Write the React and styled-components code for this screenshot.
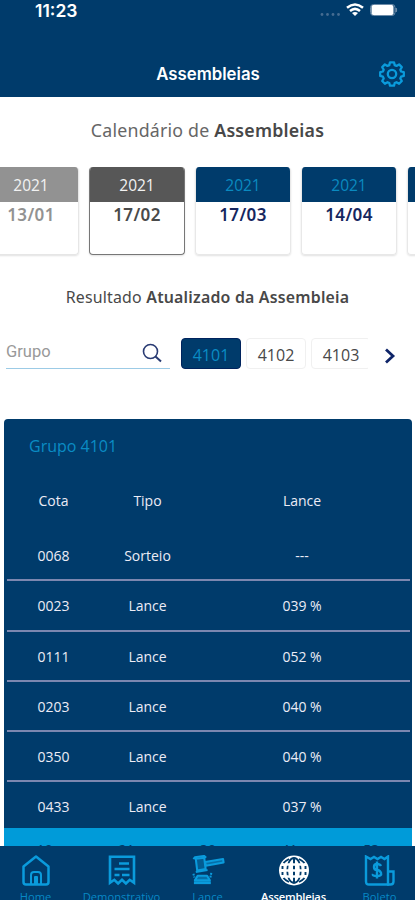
import { createGlobalStyle, styled } from 'styled-components';

const GlobalStyle = createGlobalStyle`
  * {
    box-sizing: border-box;
  }

  body {
    margin: 0;
    background: #fff;
    font-family: 'Open Sans', 'Noto Sans', sans-serif;
  }
`;

const Screen = styled.div`
  width: 415px;
  height: 900px;
  overflow: hidden;
  display: flex;
  flex-direction: column;
  background: #fff;
`;

const Header = styled.header`
  flex: none;
  height: 97px;
  background: #003b6b;
  color: #fff;
  font-family: Inter, sans-serif;
`;

const StatusBar = styled.div`
  display: flex;
  justify-content: space-between;
  height: 22px;
  padding: 0 17px 0 35px;
`;

const Clock = styled.span`
  font-size: 17.5px;
  font-weight: 600;
  line-height: 21px;
`;

const TitleBar = styled.div`
  display: grid;
  grid-template-columns: 1fr auto 1fr;
  align-items: center;
  height: 75px;
  padding: 37px 10px 8px 11px;
`;

const Title = styled.h1`
  grid-column: 2;
  margin: 0;
  font-size: 16.8px;
  font-weight: 600;
  line-height: 24px;
`;

const GearButton = styled.button`
  justify-self: end;
  display: flex;
  padding: 0;
  border: none;
  background: none;
  color: #0a9bdc;
`;

const Heading = styled.h2`
  flex: none;
  margin: ${(props) => props.$margin};
  text-align: center;
  color: ${(props) => props.$color};
  font-family: 'Noto Sans', sans-serif;
  font-size: ${(props) => props.$size};
  font-weight: 400;
  letter-spacing: 0.2px;
  line-height: 24px;
  white-space: nowrap;

  b {
    font-weight: 600;
    color: #484848;
  }
`;

const Calendar = styled.div`
  flex: none;
  display: flex;
  gap: 10px;
  width: 415px;
  margin-top: 25px;
  padding-bottom: 4px;
  overflow: hidden;
`;

const tones = {
  past: { head: '#929292', year: '#f2f2f2', date: '#929292', border: '#e6e6e6' },
  current: { head: '#575757', year: '#f2f2f2', date: '#4a4a4a', border: '#777' },
  next: { head: '#003b6b', year: '#0a8ac0', date: '#15275f', border: '#e8e8e8' },
};

const DateCard = styled.div`
  flex: none;
  width: 96px;
  height: 88px;
  border: 1px solid ${(props) => tones[props.$tone].border};
  border-top: none;
  border-radius: 4px;
  overflow: hidden;
  text-align: center;
  box-shadow: 0 1px 2px rgba(0, 0, 0, 0.12);

  &:first-child {
    margin-left: -17px;
  }
`;

const Year = styled.div`
  height: 35px;
  margin: 0 -1px;
  background: ${(props) => tones[props.$tone].head};
  color: ${(props) => tones[props.$tone].year};
  font-size: 15.5px;
  line-height: 37px;
`;

const Day = styled.div`
  color: ${(props) => tones[props.$tone].date};
  font-family: 'Noto Sans', sans-serif;
  font-size: 17px;
  font-weight: 600;
  letter-spacing: 0.4px;
  line-height: 26px;
`;

const Filters = styled.div`
  flex: none;
  display: flex;
  height: 33px;
  margin-top: 29px;
  padding-left: 6px;
`;

const SearchField = styled.label`
  display: flex;
  align-items: center;
  width: 164px;
  height: 31px;
  padding-right: 8px;
  border-bottom: 1px solid #9ccbe6;
`;

const SearchInput = styled.input`
  flex: 1;
  min-width: 0;
  height: 26px;
  margin-bottom: 3px;
  padding: 0;
  border: none;
  outline: none;
  background: none;
  font: 16.5px Roboto, sans-serif;

  &::placeholder {
    color: #999;
  }
`;

const GroupList = styled.div`
  display: flex;
  gap: 5px;
  width: 187px;
  margin-left: 11px;
  overflow: hidden;
`;

const GroupButton = styled.button`
  flex: none;
  width: 60px;
  height: 31px;
  padding: 2px 0 0;
  border: 1px solid ${(props) => (props.$active ? '#00235d' : '#f0f0f0')};
  border-radius: 4px;
  background: ${(props) => (props.$active ? '#003b6b' : '#fff')};
  color: ${(props) => (props.$active ? '#0a8cc4' : '#484848')};
  font: 16px 'Open Sans', sans-serif;
`;

const NextButton = styled.button`
  display: flex;
  align-items: center;
  margin-left: 16px;
  padding: 2px 0 0;
  border: none;
  background: none;
  color: #0e2468;
`;

const Results = styled.section`
  flex: 1;
  min-height: 0;
  margin: 48px 3px 0 4px;
  border-radius: 4px 4px 0 0;
  overflow: hidden;
  background: #003b6b;
  color: #ececf6;
`;

const GroupTitle = styled.h3`
  margin: 0;
  padding: 15px 0 0 25px;
  color: #0a8cc4;
  font-size: 16px;
  font-weight: 400;
  line-height: 24px;
`;

const Row = styled.div`
  display: grid;
  grid-template-columns: 93px 95px 1fr;
  height: ${(props) => (props.$head ? '73px' : '50.25px')};
  margin: 0 2px 0 3px;
  padding-top: ${(props) => (props.$head ? '32px' : '14px')};
  border-bottom: ${(props) => (props.$head ? 'none' : '2px solid #7c87b0')};
  font-size: 14px;
  font-weight: 500;
  line-height: 22px;
  text-align: center;

  &:nth-last-child(2) {
    height: 46px;
    border-bottom: none;
  }
`;

const Cell = styled.span`
  padding-right: ${(props) => (props.$wide ? '1px' : '0')};
`;

const Pages = styled.div`
  display: flex;
  justify-content: space-around;
  height: 40px;
  padding-top: 12px;
  background: #009bd9;
  color: #003b6b;
  font-size: 14px;
  line-height: 20px;
`;

const TabBar = styled.nav`
  flex: none;
  display: grid;
  grid-template-columns: repeat(5, 86px);
  justify-content: center;
  height: 54px;
  overflow: hidden;
  background: #003b6b;
`;

const Tab = styled.a`
  display: flex;
  flex-direction: column;
  align-items: center;
  padding-top: 9px;
  color: ${(props) => (props.$active ? '#fff' : '#0a9bdc')};

  svg {
    height: 31px;
  }
`;

const TabLabel = styled.span`
  margin-top: 2px;
  font-size: 11.2px;
  font-weight: ${(props) => (props.$active ? 600 : 400)};
  letter-spacing: ${(props) => (props.$active ? '-0.2px' : '0')};
  line-height: 18px;
  white-space: nowrap;
  opacity: ${(props) => (props.$active ? 1 : 0.8)};
`;

const StatusIcons = () => (
  <svg width="78" height="22" viewBox="0 0 78 22" fill="none">
    <g fill="#456c91">
      <circle cx="2" cy="14.5" r="1.4" />
      <circle cx="7.5" cy="14.5" r="1.4" />
      <circle cx="13" cy="14.5" r="1.4" />
      <circle cx="18.5" cy="14.5" r="1.4" />
    </g>
    <path d="M27 7.8Q35 1.1 43 7.8M30 11Q35 6.7 40 11" stroke="#fff" strokeWidth="2.5" />
    <path d="m32 13 3 3 3-3Q35 10.8 32 13Z" fill="#fff" />
    <rect x="50.5" y="4.5" width="24.5" height="11" rx="3" stroke="#6c8ba8" />
    <rect x="51.5" y="5" width="22" height="10" rx="1.8" fill="#fff" />
    <path d="M76 8v4q1.5-2 0-4Z" fill="#8da5bb" stroke="#6c8ba8" />
  </svg>
);

const GearIcon = () => (
  <svg width="26" height="26" viewBox="0 0 26 26" fill="none" stroke="currentColor" strokeWidth="2.3" strokeLinejoin="round">
    <path d="M11 1.3h4l.7 2.8 1.8.8 2.6-1.5 2.7 2.7-1.5 2.6.8 1.8 2.7.7v3.7l-2.7.7-.8 1.8 1.5 2.6-2.7 2.7-2.6-1.5-1.8.8-.7 2.7h-4l-.7-2.7-1.8-.8-2.6 1.5L3.2 20l1.5-2.6-.8-1.8-2.7-.7v-3.7l2.7-.7.8-1.8L3.2 6.1l2.7-2.7 2.6 1.5 1.800-.8z" />
    <circle cx="13" cy="13" r="4.2" />
  </svg>
);

const SearchIcon = () => (
  <svg width="20" height="20" viewBox="0 0 20 20" fill="none" stroke="#293b73" strokeWidth="1.6">
    <circle cx="8.5" cy="8.5" r="7" />
    <path d="m13.5 13.5 5.5 5" strokeWidth="2" />
  </svg>
);

const ChevronIcon = () => (
  <svg width="12" height="16" viewBox="0 0 12 16" fill="none" stroke="currentColor" strokeWidth="2.8">
    <path d="m2 1.5 7 6.5-7 6.5" />
  </svg>
);

const HomeIcon = () => (
  <svg width="28" height="31" viewBox="0 0 28 31" fill="none" stroke="currentColor" strokeWidth="2.5" strokeLinejoin="round">
    <path d="M1.5 11.5 14 1.5l12.5 10V27q0 2.5-2.500 2.500H4q-2.500 0-2.500-2.500Z" />
    <path d="M9 29v-9q0-3 3-3h4q3 0 3 3v9M13 29v-7h2v7" strokeWidth="2" />
  </svg>
);

const ReceiptIcon = () => (
  <svg width="28" height="31" viewBox="0 0 28 31" fill="none" stroke="currentColor" strokeWidth="2.6">
    <path d="M2 1.8h24v26l-4.3-3-3.8 3.6-3.9-3.6-3.9 3.6-3.8-3.6-4.300 3Z" />
    <path d="M11 8.5h10M6.5 14h15M6.5 20h5M14 20h7.5" strokeWidth="2.3" />
  </svg>
);

const GavelIcon = () => (
  <svg width="38" height="33" viewBox="0 0 38 33" fill="none" stroke="currentColor" strokeWidth="2.2" strokeLinejoin="round">
    <path d="m6 4 9-1 1.5 12-9 1.5Z" fill="currentColor" fillOpacity=".35" />
    <path d="M3.500 4.500 5 2.500 15 1l2 2M6 18l12.500-2" />
    <path d="m16 7.500 19-3.200.6 3.700-19 3.500Z" fill="currentColor" fillOpacity=".55" />
    <path d="M8 22h10l3 5H5Z" fill="currentColor" fillOpacity=".55" />
    <path d="M4 29.500h18" strokeWidth="3" />
    <path d="m3.500 20 1 4M22.500 19l-1 5" strokeDasharray="2 1" />
  </svg>
);

const GlobeIcon = () => (
  <svg width="30" height="31" viewBox="0 0 30 31" fill="none" stroke="#003b6b">
    <circle cx="15" cy="15.5" r="15" fill="#fff" stroke="none" />
    <ellipse cx="15" cy="15.5" rx="6.8" ry="12.5" strokeWidth="1.8" />
    <path d="M15 3v25" strokeWidth="2" />
    <path d="M3.500 15.500h23M5.500 9.500h19M5.500 21.500h19" stroke="#fff" strokeWidth="2.400" />
    <path d="M10 4Q6 6 4.500 8M20 4q4 2 5.500 4M10 27q-4-2-5.500-4M20 27q4-2 5.500-4M3.500 11v3M3.500 17v3M26.500 11v3M26.500 17v3" strokeWidth="1.900" />
  </svg>
);

const BillIcon = () => (
  <svg width="31" height="31" viewBox="0 0 31 31" fill="none" stroke="currentColor" strokeWidth="2.4">
    <path d="M2 1.5 6.5 4l3.5-2 3.5 2L17 2l3.5 2L24 1.5v28H5q-3 0-3-3Z" />
    <path d="M24 16.5h5.5v10q0 3-3 3H23" />
    <path d="M17 11q-1-2-4-2t-3 3 3 3 4 3-4 3-4-2M13 6.5v17" />
  </svg>
);

const dates = [
  { year: '2021', day: '13/01', tone: 'past' },
  { year: '2021', day: '17/02', tone: 'current' },
  { year: '2021', day: '17/03', tone: 'next' },
  { year: '2021', day: '14/04', tone: 'next' },
  { year: '', day: '', tone: 'next' },
];

const results = [
  ['0068', 'Sorteio', '---'],
  ['0023', 'Lance', '039 %'],
  ['0111', 'Lance', '052 %'],
  ['0203', 'Lance', '040 %'],
  ['0350', 'Lance', '040 %'],
  ['0433', 'Lance', '037 %'],
];

const tabs = [
  { label: 'Home', Icon: HomeIcon },
  { label: 'Demonstrativo', Icon: ReceiptIcon },
  { label: 'Lance', Icon: GavelIcon },
  { label: 'Assembleias', Icon: GlobeIcon, active: true },
  { label: 'Boleto', Icon: BillIcon },
];

const App = () => (
  <>
    <GlobalStyle />
    <Screen>
      <Header>
        <StatusBar>
          <Clock>11:23</Clock>
          <StatusIcons />
        </StatusBar>
        <TitleBar>
          <Title>Assembleias</Title>
          <GearButton aria-label="Configurações">
            <GearIcon />
          </GearButton>
        </TitleBar>
      </Header>

      <Heading $size="17.8px" $margin="21px 0 0" $color="#666">
        Calendário de <b>Assembleias</b>
      </Heading>
      <Calendar>
        {dates.map(({ year, day, tone }, index) => (
          <DateCard key={index} $tone={tone}>
            <Year $tone={tone}>{year}</Year>
            <Day $tone={tone}>{day}</Day>
          </DateCard>
        ))}
      </Calendar>

      <Heading $size="15.9px" $margin="26px 0 0" $color="#484848">
        Resultado <b>Atualizado da Assembleia</b>
      </Heading>
      <Filters>
        <SearchField>
          <SearchInput placeholder="Grupo" />
          <SearchIcon />
        </SearchField>
        <GroupList>
          <GroupButton $active>4101</GroupButton>
          <GroupButton>4102</GroupButton>
          <GroupButton>4103</GroupButton>
        </GroupList>
        <NextButton aria-label="Próximo">
          <ChevronIcon />
        </NextButton>
      </Filters>

      <Results>
        <GroupTitle>Grupo 4101</GroupTitle>
        <Row $head>
          <Cell>Cota</Cell>
          <Cell>Tipo</Cell>
          <Cell $wide>Lance</Cell>
        </Row>
        {results.map(([cota, tipo, lance]) => (
          <Row key={cota}>
            <Cell>{cota}</Cell>
            <Cell>{tipo}</Cell>
            <Cell $wide>{lance}</Cell>
          </Row>
        ))}
        <Pages>
          <span>10</span>
          <span>21</span>
          <span>30</span>
          <span>41</span>
          <span>53</span>
        </Pages>
      </Results>

      <TabBar>
        {tabs.map(({ label, Icon, active }) => (
          <Tab key={label} $active={active}>
            <Icon />
            <TabLabel $active={active}>{label}</TabLabel>
          </Tab>
        ))}
      </TabBar>
    </Screen>
  </>
);

export default App;
